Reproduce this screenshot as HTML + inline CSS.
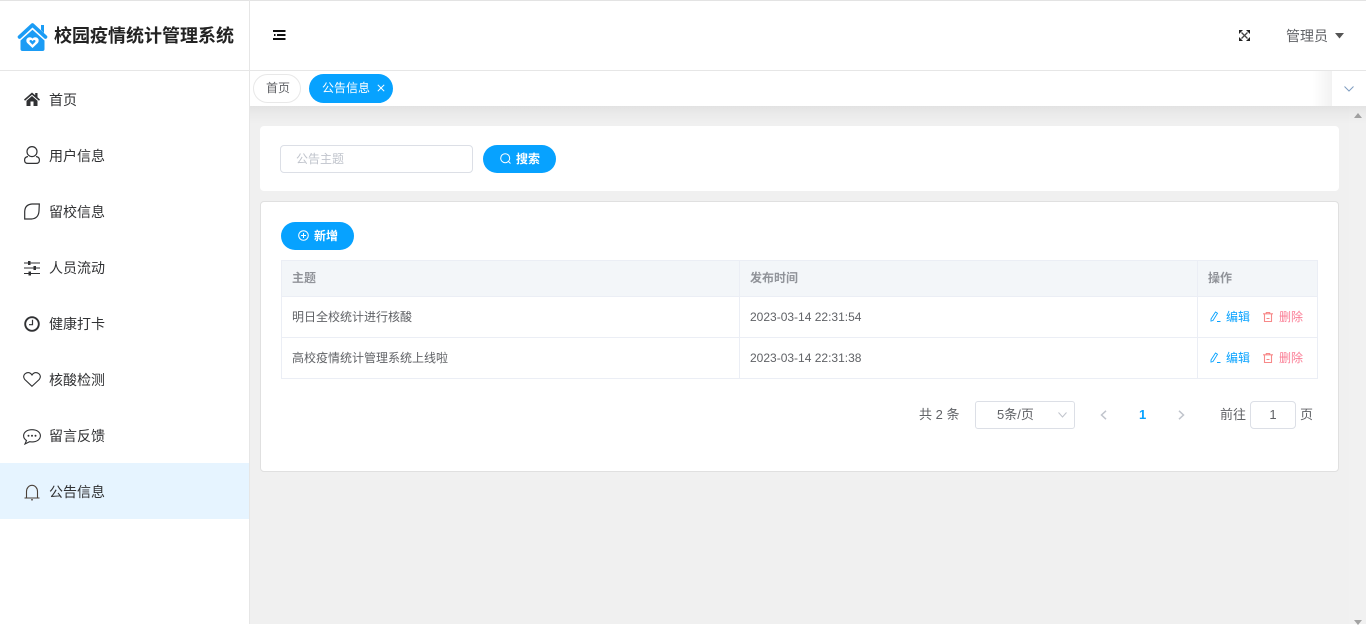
<!DOCTYPE html>
<html lang="zh"><head><meta charset="utf-8"><style>
*{box-sizing:border-box}
html,body{margin:0;padding:0;width:1366px;height:624px;overflow:hidden;background:#fff;font-family:"Liberation Sans","Noto Sans CJK SC",sans-serif;font-size:14px;color:#333}
.a{position:absolute}
.t{position:absolute;white-space:nowrap;line-height:20px}
svg{position:absolute;display:block;overflow:visible}
.m{position:absolute;left:49px;font-size:14px;line-height:20px;color:#303133;white-space:nowrap}
.btn{position:absolute;background:#07a2ff;border-radius:14px;height:28px;width:73px;color:#fff;font-size:12px;font-weight:700;line-height:28px}
.ln{position:absolute;background:#ebeef5}
.c{position:absolute;font-size:12px;line-height:20px;color:#606266;white-space:nowrap}
.ed{color:#07a2ff}.de{color:#fb7d95}
</style></head><body>
<div class="a" style="left:0;top:0;width:1366px;height:1px;background:#e3e3e3"></div>
<div class="a" style="left:249px;top:0;width:1px;height:624px;background:#e6e6e6"></div>
<div class="a" style="left:0;top:70px;width:1366px;height:1px;background:#e6e6e6"></div>
<div class="a" style="left:250px;top:106px;width:1116px;height:518px;background:#f0f0f0"></div>

<svg style="left:17px;top:22px" width="31" height="31" viewBox="0 0 31 31"><path d="M2.500 15L15.500 3L28.500 15" fill="none" stroke="#1b9cf5" stroke-width="3.600" stroke-linecap="round" stroke-linejoin="round"/><path d="M24 3H27V11L24 8Z" fill="#1b9cf5"/><path d="M15.500 7.800L27.500 18.500V27Q27.500 29 25.500 29H5.500Q3.500 29 3.500 27V18.500Z" fill="#1b9cf5"/><path d="M15.500 26L10 20.800Q8.300 17.800 10.800 15.800Q13.800 14.300 15.500 16.500Q17.200 14.300 20.200 15.800Q22.700 17.800 21 20.800Z" fill="#fff"/><path d="M15.500 22.800L12.800 20Q12 18.500 13.300 18Q14.800 17.800 15.500 19.200Q16.200 17.800 17.700 18Q19 18.500 18.200 20Z" fill="#1b9cf5"/></svg>
<div class="t" style="left:54px;top:23px;font-size:18px;font-weight:700;line-height:26px;color:#222">校园疫情统计管理系统</div>

<svg style="left:273px;top:30px" width="13" height="10" viewBox="0 0 13 10"><path d="M0 0H12.500V2H0ZM4 4H12.500V6H4ZM0 8H12.500V10H0ZM1 4H2.500V6H1Z" fill="#111"/></svg>
<svg style="left:1239px;top:30px" width="11" height="11" viewBox="0 0 11 11"><path d="M2.500 2.500L8.500 8.500M8.500 2.500L2.500 8.500" stroke="#444" stroke-width="1.300"/><path d="M0 0H4L0 4ZM11 0V4L7 0ZM0 11V7L4 11ZM11 11H7L11 7Z" fill="#222"/></svg>
<div class="t" style="left:1286px;top:26px;color:#606266">管理员</div>
<svg style="left:1335px;top:33px" width="9" height="6" viewBox="0 0 9 6"><path d="M0 0H9L4.500 5.500Z" fill="#555"/></svg>

<!-- scrollbar -->
<div class="a" style="left:1349px;top:106px;width:17px;height:518px;background:#f1f1f1"></div>
<svg style="left:1354px;top:113px" width="8" height="5" viewBox="0 0 8 5"><path d="M0 5L4 0L8 5Z" fill="#a3a3a3"/></svg>
<svg style="left:1354px;top:620px" width="8" height="5" viewBox="0 0 8 5"><path d="M0 0L4 5L8 0Z" fill="#a3a3a3"/></svg>

<!-- tabs -->
<div class="a" style="left:250px;top:106px;width:1116px;height:18px;background:linear-gradient(180deg,rgba(0,0,0,.06),rgba(0,0,0,.025) 45%,rgba(0,0,0,0))"></div>
<div class="a" style="left:250px;top:71px;width:1116px;height:35px;background:#fff"></div>
<div class="a" style="left:253px;top:74px;width:48px;height:29px;border:1px solid #e8e8e8;border-radius:15px;background:#fff;color:#606266;font-size:12px;line-height:27px;padding-left:12px">首页</div>
<div class="a" style="left:309px;top:74px;width:84px;height:29px;border-radius:15px;background:#07a2ff;color:#fff;font-size:12px;line-height:29px;padding-left:13px">公告信息</div>
<svg style="left:377px;top:84px" width="8" height="8" viewBox="0 0 8 8"><path d="M.8.800L7.200 7.200M7.200.800L.8 7.200" stroke="#fff" stroke-width="1"/></svg>
<div class="a" style="left:1312px;top:71px;width:20px;height:35px;background:linear-gradient(90deg,rgba(0,0,0,0),rgba(0,0,0,.05))"></div>
<div class="a" style="left:1332px;top:71px;width:34px;height:35px;background:#fff"></div>
<svg style="left:1344px;top:86px" width="10" height="6" viewBox="0 0 10 6"><path d="M.5.500L5 5L9.500.500" fill="none" stroke="#7f9dc0" stroke-width="1"/></svg>

<!-- menu -->
<div class="a" style="left:0;top:463px;width:249px;height:56px;background:#e6f4ff"></div>
<svg style="left:24px;top:92px" width="16" height="14" viewBox="0 0 16 14"><path d="M8 0.500L0 7.500L1 8.700L8 2.800L15 8.700L16 7.500L13.500 5.300V1H11.200V3.300ZM8 4L2.500 8.700V14H6.500V9.500H9.500V14H13.500V8.700Z" fill="#303133"/></svg>
<div class="m" style="top:90px">首页</div>
<svg style="left:24px;top:146px" width="16" height="18" viewBox="0 0 16 18" fill="none" stroke="#303133" stroke-width="1.200"><circle cx="8" cy="5.600" r="5"/><path d="M4 10.500Q.6 11 .6 14V14.200Q.6 17.400 4 17.400H12Q15.400 17.400 15.400 14.200V14Q15.400 11 12 10.500"/></svg>
<div class="m" style="top:146px">用户信息</div>
<svg style="left:24px;top:203px" width="16" height="17" viewBox="0 0 16 17" fill="none" stroke="#303133" stroke-width="1.200"><path d="M15.300 1H8Q1 1.500 .7 8.500V16H7.500Q14.500 15.500 15 8Z"/></svg>
<div class="m" style="top:202px">留校信息</div>
<svg style="left:24px;top:261px" width="16" height="14" viewBox="0 0 16 14" fill="#303133"><path d="M0 1.500H16V2.500H0ZM0 6.500H16V7.500H0ZM0 12H16V13H0Z"/><path d="M4 0H6.500V4H4ZM9.500 5H12V9H9.500ZM4.500 10.500H7V14.500H4.500Z"/></svg>
<div class="m" style="top:258px">人员流动</div>
<svg style="left:24px;top:316px" width="16" height="16" viewBox="0 0 16 16" fill="none" stroke="#303133"><circle cx="8" cy="8" r="6.800" stroke-width="1.900"/><path d="M8.500 3.800V8.700H5" stroke-width="1.200"/></svg>
<div class="m" style="top:314px">健康打卡</div>
<svg style="left:23px;top:372px" width="18" height="15" viewBox="0 0 18 15" fill="none" stroke="#303133" stroke-width="1.100"><path d="M9 14.300L1.800 7.500Q-.5 4.500 1.800 2Q4 0 6.500.8Q8 1.300 9 3Q10 1.300 11.500.8Q14 0 16.200 2Q18.500 4.500 16.200 7.500Z"/></svg>
<div class="m" style="top:370px">核酸检测</div>
<svg style="left:23px;top:429px" width="18" height="16" viewBox="0 0 18 16" fill="none" stroke="#303133" stroke-width="1.100"><path d="M9 .7C4 .7.6 3.200.6 6.800C.6 9 1.800 10.500 3.500 11.500L2 15L6.500 12.700Q7.500 12.900 9 12.900C14 12.900 17.400 10.300 17.400 6.800C17.400 3.200 14 .7 9 .7Z"/><circle cx="5.500" cy="6.800" r="1" fill="#303133" stroke="none"/><circle cx="9" cy="6.800" r="1" fill="#303133" stroke="none"/><circle cx="12.500" cy="6.800" r="1" fill="#303133" stroke="none"/></svg>
<div class="m" style="top:426px">留言反馈</div>
<svg style="left:24px;top:484px" width="16" height="16" viewBox="0 0 16 16" fill="none" stroke="#4a4038" stroke-width="1.100"><path d="M.5 14H15.500M2.500 14V7.500C2.500 4 5 1.300 8 1.300C11 1.300 13.500 4 13.500 7.500V14"/><path d="M7 15.800H9" /></svg>
<div class="m" style="top:482px">公告信息</div>

<!-- search card -->
<div class="a" style="left:260px;top:126px;width:1079px;height:65px;background:#fff;border-radius:4px"></div>
<div class="a" style="left:280px;top:145px;width:193px;height:28px;border:1px solid #dcdfe6;border-radius:4px;background:#fff;font-size:12px;line-height:26px;padding-left:15px;color:#c0c4cc">公告主题</div>
<div class="btn" style="left:483px;top:145px;padding-left:33px">搜索</div>
<svg style="left:500px;top:153px" width="11" height="11" viewBox="0 0 11 11" fill="none" stroke="#fff" stroke-width="1"><circle cx="5.200" cy="5.200" r="4.500"/><path d="M8.500 8.500L10.500 10.500"/></svg>

<!-- table card -->
<div class="a" style="left:260px;top:201px;width:1079px;height:271px;background:#fff;border:1px solid #e0e0e0;border-radius:4px"></div>
<div class="btn" style="left:281px;top:222px;padding-left:33px">新增</div>
<svg style="left:298px;top:230px" width="11" height="11" viewBox="0 0 11 11" fill="none" stroke="#fff" stroke-width="1"><circle cx="5.500" cy="5.500" r="4.800"/><path d="M5.500 3V8M3 5.500H8"/></svg>

<div class="a" style="left:281px;top:260px;width:1037px;height:37px;background:#f3f6f9"></div>
<div class="ln" style="left:281px;top:260px;width:1037px;height:1px"></div>
<div class="ln" style="left:281px;top:296px;width:1037px;height:1px"></div>
<div class="ln" style="left:281px;top:337px;width:1037px;height:1px"></div>
<div class="ln" style="left:281px;top:378px;width:1037px;height:1px"></div>
<div class="ln" style="left:281px;top:260px;width:1px;height:119px"></div>
<div class="ln" style="left:739px;top:260px;width:1px;height:119px"></div>
<div class="ln" style="left:1197px;top:260px;width:1px;height:119px"></div>
<div class="ln" style="left:1317px;top:260px;width:1px;height:119px"></div>
<div class="c" style="left:292px;top:268px;color:#909399;font-weight:700">主题</div>
<div class="c" style="left:750px;top:268px;color:#909399;font-weight:700">发布时间</div>
<div class="c" style="left:1208px;top:268px;color:#909399;font-weight:700">操作</div>
<div class="c" style="left:292px;top:307px">明日全校统计进行核酸</div>
<div class="c" style="left:750px;top:307px">2023-03-14 22:31:54</div>
<div class="c" style="left:292px;top:348px">高校疫情统计管理系统上线啦</div>
<div class="c" style="left:750px;top:348px">2023-03-14 22:31:38</div>

<svg style="left:1210px;top:311px" width="11" height="11" viewBox="0 0 11 11" fill="none" stroke="#07a2ff" stroke-width=".9"><path d="M1 8L5.500 1L7.500 2.300L3 9.500L1 10ZM7 10.500H10.500"/></svg>
<div class="c ed" style="left:1226px;top:307px">编辑</div>
<svg style="left:1263px;top:312px" width="10" height="10" viewBox="0 0 10 10" fill="none" stroke="#f78989" stroke-width="1.100"><path d="M0 1.800H10M3.300 1.800V.5H6.700V1.800M1.500 1.800V9.500H8.500V1.800M3.500 6.500H6.500"/></svg>
<div class="c de" style="left:1279px;top:307px">删除</div>
<svg style="left:1210px;top:352px" width="11" height="11" viewBox="0 0 11 11" fill="none" stroke="#07a2ff" stroke-width=".9"><path d="M1 8L5.500 1L7.500 2.300L3 9.500L1 10ZM7 10.500H10.500"/></svg>
<div class="c ed" style="left:1226px;top:348px">编辑</div>
<svg style="left:1263px;top:353px" width="10" height="10" viewBox="0 0 10 10" fill="none" stroke="#f78989" stroke-width="1.100"><path d="M0 1.800H10M3.300 1.800V.5H6.700V1.800M1.500 1.800V9.500H8.500V1.800M3.500 6.500H6.500"/></svg>
<div class="c de" style="left:1279px;top:348px">删除</div>

<!-- pagination -->
<div class="t" style="left:919px;top:405px;font-size:13px;color:#606266">共 2 条</div>
<div class="a" style="left:975px;top:401px;width:100px;height:28px;border:1px solid #dcdfe6;border-radius:3px;background:#fff;font-size:13px;line-height:26px;padding-left:21px;color:#606266">5条/页</div>
<svg style="left:1058px;top:412px" width="9" height="6" viewBox="0 0 9 6"><path d="M.5.500L4.500 5L8.500.500" fill="none" stroke="#c0c4cc"/></svg>
<svg style="left:1100px;top:410px" width="7" height="10" viewBox="0 0 7 10"><path d="M6 .8L1.500 5L6 9.200" fill="none" stroke="#c0c4cc" stroke-width="1.500"/></svg>
<div class="t" style="left:1139px;top:405px;font-size:13px;font-weight:700;color:#07a2ff">1</div>
<svg style="left:1178px;top:410px" width="7" height="10" viewBox="0 0 7 10"><path d="M1 .8L5.500 5L1 9.200" fill="none" stroke="#c0c4cc" stroke-width="1.500"/></svg>
<div class="t" style="left:1220px;top:405px;font-size:13px;color:#606266">前往</div>
<div class="a" style="left:1250px;top:401px;width:46px;height:28px;border:1px solid #dcdfe6;border-radius:4px;background:#fff;font-size:13px;line-height:26px;text-align:center;color:#606266">1</div>
<div class="t" style="left:1300px;top:405px;font-size:13px;color:#606266">页</div>
</body></html>
